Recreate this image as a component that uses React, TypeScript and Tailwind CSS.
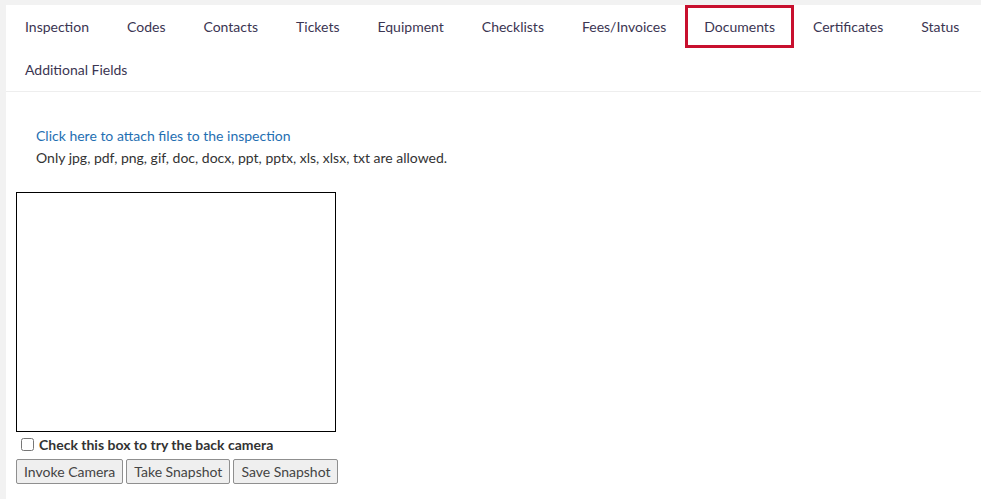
import React from 'react';

const tabs = ['Inspection', 'Codes', 'Contacts', 'Tickets', 'Equipment', 'Checklists', 'Fees/Invoices', 'Documents', 'Certificates', 'Status', 'Additional Fields'];

export default function App() {
  return (
    <div className="min-h-[499px] bg-[#f2f2f2] pl-[6px] pt-[5px] text-[14px] text-[#333]" style={{ fontFamily: 'Lato, "Noto Sans", sans-serif' }}>
      <div className="min-h-[494px] bg-white">
        <div className="flex flex-wrap border-b border-[#eeeeee] px-[-2px]">
          {tabs.map(t => (
            <div
              key={t}
              className={
                'flex h-[43px] items-center px-[16px] text-[#3b3552] ' +
                (t === 'Documents' ? 'border-[3px] border-[#c8102e] ' : 'border-[3px] border-transparent ')
              }
            >
              {t}
            </div>
          ))}
        </div>
        <div className="pl-[30px] pt-[33px] leading-[22px]">
          <a className="text-[#1f6fb2]">Click here to attach files to the inspection</a>
          <div className="text-[#333]">Only jpg, pdf, png, gif, doc, docx, ppt, pptx, xls, xlsx, txt are allowed.</div>
        </div>
        <div className="pl-[10px] pt-[23px]">
          <div className="h-[240px] w-[320px] border border-black" />
          <label className="mt-[2px] flex items-center gap-[5px] pl-[5px] font-bold text-[#333]">
            <input type="checkbox" className="h-[13px] w-[13px]" />
            Check this box to try the back camera
          </label>
          <div className="mt-[4px] flex gap-[3px]">
            {['Invoke Camera', 'Take Snapshot', 'Save Snapshot'].map(b => (
              <button key={b} className="h-[25px] rounded-[2px] border border-[#8f8f8f] bg-[#efefef] px-[7px] text-[14px] text-[#444]">{b}</button>
            ))}
          </div>
        </div>
      </div>
    </div>
  );
}
